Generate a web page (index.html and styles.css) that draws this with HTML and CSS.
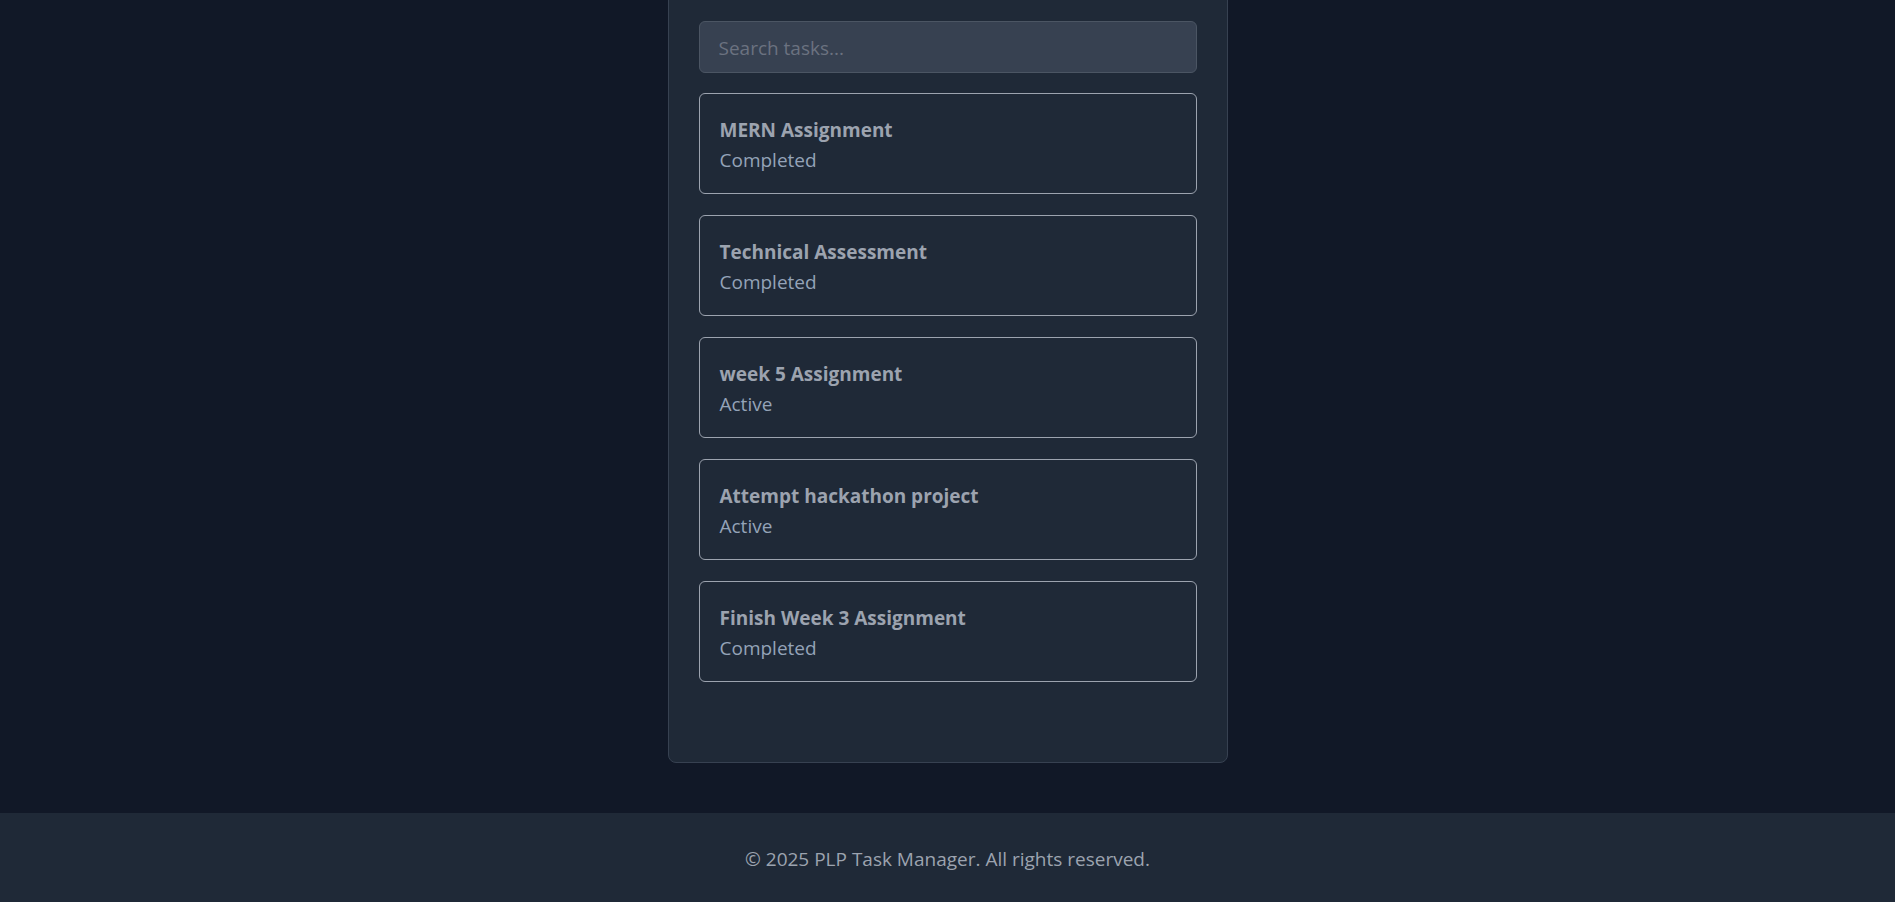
FILE: index.html
```html
<!DOCTYPE html>
<html lang="en">
<head>
<meta charset="utf-8">
<title>PLP Task Manager</title>
<link rel="stylesheet" href="styles.css">
</head>
<body>
<div class="page">
  <main class="main">
    <section class="panel">
      <input class="search" type="text" placeholder="Search tasks...">
      <ul class="task-list">
        <li class="task">
          <div class="task-title">MERN Assignment</div>
          <div class="task-status">Completed</div>
        </li>
        <li class="task">
          <div class="task-title">Technical Assessment</div>
          <div class="task-status">Completed</div>
        </li>
        <li class="task">
          <div class="task-title">week 5 Assignment</div>
          <div class="task-status">Active</div>
        </li>
        <li class="task">
          <div class="task-title">Attempt hackathon project</div>
          <div class="task-status">Active</div>
        </li>
        <li class="task">
          <div class="task-title">Finish Week 3 Assignment</div>
          <div class="task-status">Completed</div>
        </li>
      </ul>
    </section>
  </main>
  <footer class="footer">© 2025 PLP Task Manager. All rights reserved.</footer>
</div>
</body>
</html>
```

FILE: styles.css
```css
* { box-sizing: border-box; }
html, body { margin: 0; padding: 0; }
body {
  background: #111827;
  font-family: "Open Sans", "Noto Sans", sans-serif;
  color: #9ca3af;
}
.page {
  min-height: 100vh;
  display: flex;
  flex-direction: column;
}
.main {
  flex: 1;
  margin-top: -11px;
  padding-bottom: 50px;
}
.panel {
  width: 560px;
  margin: 0 auto;
  background: #1f2937;
  border: 1px solid #374151;
  border-radius: 8px;
  padding: 31px 30px 80px;
}
.search {
  display: block;
  width: 100%;
  height: 52px;
  background: #374151;
  border: 1px solid #4b5563;
  border-radius: 6px;
  padding: 2px 19px 0;
  font-family: inherit;
  font-size: 19px;
  color: #d1d5db;
  outline: none;
}
.search::placeholder { color: #6b7280; }
.task-list {
  list-style: none;
  margin: 20px 0 0;
  padding: 0;
  display: flex;
  flex-direction: column;
  gap: 21px;
}
.task {
  height: 101px;
  border: 1px solid #9ca3af;
  border-radius: 6px;
  padding: 22px 20px 0;
}
.task-title {
  font-size: 19px;
  font-weight: 700;
  line-height: 28px;
  color: #9ca3af;
}
.task-status {
  margin-top: 2px;
  font-size: 19px;
  line-height: 28px;
  color: #94a3b8;
}
.footer {
  height: 89px;
  background: #1f2937;
  display: flex;
  align-items: center;
  justify-content: center;
  padding-top: 2px;
  font-size: 19px;
  color: #9ca3af;
}
```
